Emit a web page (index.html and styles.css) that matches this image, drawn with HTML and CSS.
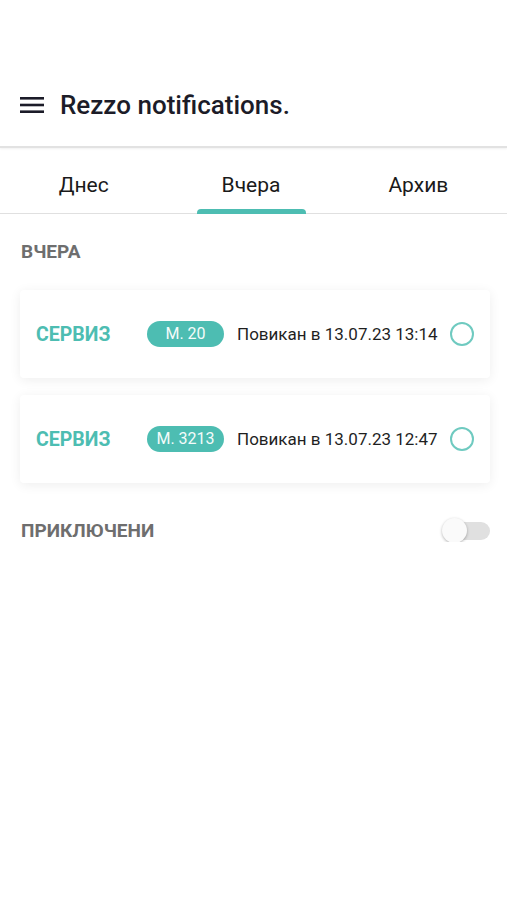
FILE: index.html
```html
<!DOCTYPE html>
<html lang="bg">
<head>
  <meta charset="UTF-8">
  <title>Rezzo notifications.</title>
  <link rel="stylesheet" href="styles.css">
</head>
<body>

  <header class="appbar">
    <div class="appbar-row">
      <svg class="menu-icon" width="24" height="16" viewBox="0 0 24 16">
        <rect x="0" y="0" width="24" height="2.6" fill="#1c1c28"/>
        <rect x="0" y="6.7" width="24" height="2.6" fill="#1c1c28"/>
        <rect x="0" y="13.4" width="24" height="2.6" fill="#1c1c28"/>
      </svg>
      <h1 class="title">Rezzo notifications.</h1>
    </div>
  </header>

  <nav class="tabs">
    <div class="tab">Днес</div>
    <div class="tab active">Вчера</div>
    <div class="tab">Архив</div>
  </nav>

  <main class="content">
    <div class="section-label">ВЧЕРА</div>

    <div class="card">
      <span class="kind">СЕРВИЗ</span>
      <span class="badge">М. 20</span>
      <span class="called">Повикан в 13.07.23 13:14</span>
      <span class="check"></span>
    </div>

    <div class="card">
      <span class="kind">СЕРВИЗ</span>
      <span class="badge">М. 3213</span>
      <span class="called">Повикан в 13.07.23 12:47</span>
      <span class="check"></span>
    </div>

    <div class="section-row">
      <div class="section-label">ПРИКЛЮЧЕНИ</div>
      <div class="switch"><span class="knob"></span></div>
    </div>
  </main>

</body>
</html>
```

FILE: styles.css
```css
body {
  margin: 0;
  background-color: #fff;
  font-family: Roboto, 'Noto Sans', sans-serif;
  color: #222;
}
.appbar {
  height: 148px;
  box-sizing: border-box;
  padding: 80px 20px 0;
  border-bottom: 2px solid #e2e2e2;
  box-shadow: 0 1px 2px rgba(0, 0, 0, 0.06);
}
.appbar-row {
  display: flex;
  align-items: center;
  height: 50px;
}
.menu-icon {
  margin-right: 16px;
}
.title {
  margin: 0;
  font-size: 26px;
  font-weight: 500;
  color: #1c1c28;
}
.tabs {
  display: flex;
  height: 65px;
  padding-right: 5px;
  border-bottom: 1px solid #e0e0e0;
}
.tab {
  flex: 1;
  position: relative;
  display: flex;
  align-items: center;
  justify-content: center;
  padding-top: 8px;
  font-size: 21px;
  color: #1a1a1a;
}
.tab.active::after {
  content: "";
  position: absolute;
  left: 50%;
  bottom: -1px;
  width: 109px;
  height: 5px;
  margin-left: -54px;
  background-color: #4dbdb2;
  border-radius: 4px 4px 0 0;
}
.content {
  padding: 26px 17px 0 20px;
}
.section-label {
  font-size: 19px;
  font-weight: 700;
  color: #6e6e6e;
  padding-left: 1px;
}
.card {
  display: flex;
  align-items: center;
  height: 88px;
  margin-top: 27px;
  padding: 0 16px;
  background-color: #fff;
  border-radius: 4px;
  box-shadow: 0 2px 12px rgba(0, 0, 0, 0.07);
}
.card + .card {
  margin-top: 17px;
}
.kind {
  width: 111px;
  font-size: 19.5px;
  font-weight: 700;
  color: #4dbdb2;
}
.badge {
  box-sizing: border-box;
  min-width: 77px;
  height: 26px;
  padding: 0 9px;
  line-height: 26px;
  border-radius: 13px;
  background-color: #4dbdb2;
  color: #f4fbfa;
  font-size: 16px;
  text-align: center;
}
.called {
  margin-left: 13px;
  font-size: 17px;
  color: #1f1f1f;
}
.check {
  width: 20px;
  height: 20px;
  margin-left: auto;
  border: 2px solid #6fcac0;
  border-radius: 50%;
}
.section-row {
  display: flex;
  align-items: center;
  justify-content: space-between;
  margin-top: 36px;
}
.switch {
  position: relative;
  width: 35px;
  height: 18px;
  border-radius: 9px;
  background-color: #e0e0e0;
}
.knob {
  position: absolute;
  left: -13px;
  top: -4px;
  width: 25px;
  height: 25px;
  border-radius: 50%;
  background-color: #fafafa;
  box-shadow: 0 1px 3px rgba(0, 0, 0, 0.3);
}
```
